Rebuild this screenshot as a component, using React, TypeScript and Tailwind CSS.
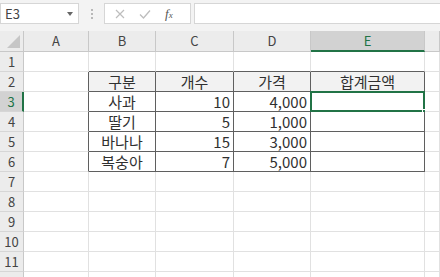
import React from 'react';

const cols = ['A', 'B', 'C', 'D', 'E', ''];

// table contents, keyed by row number
const data: Record<number, string[]> = {
  2: ['구분', '개수', '가격', '합계금액'],
  3: ['사과', '10', '4,000', ''],
  4: ['딸기', '5', '1,000', ''],
  5: ['바나나', '15', '3,000', ''],
  6: ['복숭아', '7', '5,000', ''],
};

const rows = [1, 2, 3, 4, 5, 6, 7, 8, 9, 10, 11, 12];

const font = { fontFamily: '"Noto Sans CJK KR", "Noto Sans", sans-serif' };

const Cell = ({ row, col }: { row: number; col: number }) => {
  // col: 0 = A ... 5 = F
  const inTable = row >= 2 && row <= 6 && col >= 1 && col <= 4;
  const leftOfTable = row >= 2 && row <= 6 && col === 0;
  const aboveTable = row === 1 && col >= 1 && col <= 4;
  const right = inTable || leftOfTable ? 'border-r-[#5f5f5f]' : 'border-r-[#e1e1e1]';
  const bottom = inTable || aboveTable ? 'border-b-[#5f5f5f]' : 'border-b-[#e1e1e1]';
  const bg = inTable && row === 2 ? 'bg-[#f2f2f2]' : 'bg-white';
  const value = inTable ? data[row][col - 1] : '';
  const numeric = inTable && row > 2 && (col === 2 || col === 3);
  const selected = row === 3 && col === 4;

  return (
    <div
      className={`relative h-5 border-r border-b ${right} ${bottom} ${bg} flex items-center text-[15px] leading-none text-[#303030] ${
        numeric ? 'justify-end pr-[3px]' : 'justify-center'
      }`}
    >
      {value}
      {selected && (
        <>
          <div className="absolute -left-px -top-px -right-px -bottom-px border-2 border-[#217346]" />
          <div className="absolute -right-[3px] -bottom-[3px] w-[5px] h-[5px] bg-[#217346] border border-white" />
        </>
      )}
    </div>
  );
};

export default function App() {
  return (
    <div className="w-[440px] h-[277px] overflow-hidden bg-[#f3f3f3] select-none" style={font}>
      {/* Formula bar */}
      <div className="h-[31px] flex items-start pt-[3px]">
        <div className="w-[79px] h-[21px] bg-white border border-[#d6d6d6] flex items-center justify-between pl-1 pr-[5px] text-[13px] text-[#444]">
          <span>E3</span>
          <span className="w-0 h-0 border-l-[3px] border-r-[3px] border-t-[4px] border-l-transparent border-r-transparent border-t-[#666]" />
        </div>
        <div className="w-[25px] h-[21px] flex flex-col items-center justify-center gap-[2px]">
          <span className="w-[2px] h-[2px] bg-[#b8b8b8]" />
          <span className="w-[2px] h-[2px] bg-[#b8b8b8]" />
          <span className="w-[2px] h-[2px] bg-[#b8b8b8]" />
        </div>
        <div className="w-[87px] h-[21px] bg-white border border-[#d6d6d6] flex items-center pl-[10px] gap-[14px]">
          <svg width="10" height="10" viewBox="0 0 10 10" fill="none" stroke="#bdbdbd" strokeWidth="1.2">
            <path d="M1 1 L9 9 M9 1 L1 9" />
          </svg>
          <svg width="12" height="10" viewBox="0 0 12 10" fill="none" stroke="#bdbdbd" strokeWidth="1.3">
            <path d="M1 5.5 L4.5 9 L11 1.5" />
          </svg>
          <span className="text-[13px] italic text-[#555] leading-none" style={{ fontFamily: '"Liberation Serif", serif' }}>
            f<span className="text-[9px]">x</span>
          </span>
        </div>
        <div className="ml-[3px] flex-1 h-[21px] bg-white border border-[#d6d6d6] border-r-0" />
      </div>

      {/* Sheet */}
      <div className="grid grid-cols-[24px_65px_67px_78px_77px_114px_1fr] bg-white">
        {/* corner */}
        <div className="h-[21px] bg-[#ececec] border-r border-b border-[#c8c8c8] relative">
          <svg className="absolute right-[3px] bottom-[3px]" width="13" height="13" viewBox="0 0 13 13">
            <path d="M13 0 L13 13 L0 13 Z" fill="#c6c6c6" />
          </svg>
        </div>
        {cols.map((c, i) => (
          <div
            key={i}
            className={`h-[21px] flex items-center justify-center text-[13px] border-r ${
              i === 4
                ? 'bg-[#d2d2d2] text-[#217346] border-b-2 border-b-[#217346] border-r-[#c8c8c8]'
                : 'bg-[#ececec] text-[#444] border-b border-[#c8c8c8]'
            }`}
          >
            {c}
          </div>
        ))}

        {rows.map((r) => (
          <React.Fragment key={r}>
            <div
              className={`h-5 flex items-center justify-center text-[13px] border-b border-b-[#d6d6d6] ${
                r === 3
                  ? 'bg-[#d2d2d2] text-[#217346] border-r-2 border-r-[#217346]'
                  : 'bg-[#ececec] text-[#444] border-r border-r-[#c8c8c8]'
              }`}
            >
              {r}
            </div>
            {cols.map((c, i) => (
              <Cell key={i} row={r} col={i} />
            ))}
          </React.Fragment>
        ))}
      </div>
    </div>
  );
}
